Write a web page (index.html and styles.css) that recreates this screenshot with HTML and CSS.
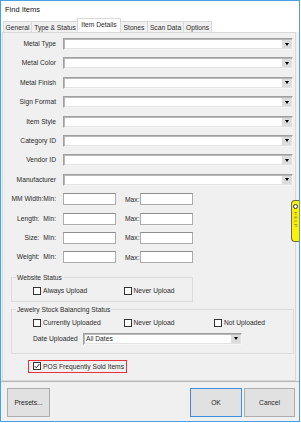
FILE: index.html
```html
<!DOCTYPE html>
<html lang="en">
<head>
    <meta charset="UTF-8">
    <title>Find Items</title>
    <link rel="stylesheet" href="styles.css">
</head>
<body>
    <div class="window">
        <div class="titlebar">Find Items</div>
        <div class="tabs">
            <div class="tab w-general">General</div>
            <div class="tab w-type">Type &amp; Status</div>
            <div class="tab w-item active">Item Details</div>
            <div class="tab w-stones">Stones</div>
            <div class="tab w-scan">Scan Data</div>
            <div class="tab w-options">Options</div>
        </div>
        <div class="panel">
            <div class="fields">
                <div class="lbl">Metal Type</div>
                <div class="combo"><span class="drop"></span></div>
                <div class="lbl">Metal Color</div>
                <div class="combo"><span class="drop"></span></div>
                <div class="lbl">Metal Finish</div>
                <div class="combo"><span class="drop"></span></div>
                <div class="lbl">Sign Format</div>
                <div class="combo"><span class="drop"></span></div>
                <div class="lbl">Item Style</div>
                <div class="combo"><span class="drop"></span></div>
                <div class="lbl">Category ID</div>
                <div class="combo"><span class="drop"></span></div>
                <div class="lbl">Vendor ID</div>
                <div class="combo"><span class="drop"></span></div>
                <div class="lbl">Manufacturer</div>
                <div class="combo"><span class="drop"></span></div>

                <div class="lbl range-lbl tight"><span>MM Width:</span><span>Min:</span></div>
                <div class="range"><div class="textbox"></div><span class="max">Max:</span><div class="textbox"></div></div>
                <div class="lbl range-lbl"><span>Length:</span><span>Min:</span></div>
                <div class="range"><div class="textbox"></div><span class="max">Max:</span><div class="textbox"></div></div>
                <div class="lbl range-lbl"><span>Size:</span><span>Min:</span></div>
                <div class="range"><div class="textbox"></div><span class="max">Max:</span><div class="textbox"></div></div>
                <div class="lbl range-lbl"><span>Weight:</span><span>Min:</span></div>
                <div class="range"><div class="textbox"></div><span class="max">Max:</span><div class="textbox"></div></div>
            </div>

            <fieldset class="group website">
                <legend>Website Status</legend>
                <div class="check-row">
                    <label class="check"><span class="cb"></span>Always Upload</label>
                    <label class="check"><span class="cb"></span>Never Upload</label>
                </div>
            </fieldset>

            <fieldset class="group stock">
                <legend>Jewelry Stock Balancing Status</legend>
                <div class="check-row">
                    <label class="check"><span class="cb"></span>Currently Uploaded</label>
                    <label class="check"><span class="cb"></span>Never Upload</label>
                    <label class="check"><span class="cb"></span>Not Uploaded</label>
                </div>
                <div class="date-row">
                    <span class="date-lbl">Date Uploaded</span>
                    <div class="combo date-combo"><span class="value">All Dates</span><span class="drop"></span></div>
                </div>
            </fieldset>

            <div class="pos">
                <label class="check">
                    <span class="cb checked">
                        <svg width="6" height="6" viewBox="0 0 6 6"><path d="M0.6 3.1 L2.3 4.8 L5.4 1.0" fill="none" stroke="#222" stroke-width="1"/></svg>
                    </span>POS Frequently Sold Items
                </label>
            </div>
        </div>
        <div class="footer">
            <button class="btn presets">Presets...</button>
            <button class="btn ok">OK</button>
            <button class="btn cancel">Cancel</button>
        </div>

        <!-- floating help tab on the right edge -->
        <div class="help-tab">
            <span class="help-dot"></span>
            <span class="help-text">HELP</span>
        </div>
    </div>
</body>
</html>
```

FILE: styles.css
```css
body {
    margin: 0;
    background: #ffffff;
    font-family: 'Liberation Sans', Arial, sans-serif;
    font-size: 6.7px;
    color: #2a2a2a;
}
.window {
    position: relative;
    width: 300px;
    height: 422px;
    box-sizing: border-box;
    border: 1px solid #4aa0e4;
    background: #f0f0f0;
    display: flex;
    flex-direction: column;
}
.titlebar {
    height: 17px;
    line-height: 17px;
    background: #ffffff;
    padding-left: 4px;
    font-size: 7.5px;
    color: #111;
}
.tabs {
    height: 14px;
    background: #ffffff;
    display: flex;
    align-items: flex-end;
    padding-left: 2px;
}
.tab {
    height: 11px;
    line-height: 11px;
    box-sizing: border-box;
    border: 1px solid #d9d9d9;
    border-bottom: none;
    margin-right: -1px;
    background: #f0f0f0;
    text-align: center;
    white-space: nowrap;
}
.tab.active {
    height: 14px;
    line-height: 12px;
    background: #ffffff;
    position: relative;
    z-index: 1;
    margin: 0 -1px 0 -1px;
}
.w-general { width: 29px; }
.w-type { width: 48px; }
.w-item { width: 44px; }
.w-stones { width: 28px; }
.w-scan { width: 37px; }
.w-options { width: 29px; }

.panel {
    height: 349px;
    box-sizing: border-box;
    margin: 0 3px 0 1px;
    border: 1px solid #d9d9d9;
    padding: 5px 2px 0 1px;
}
.fields {
    display: grid;
    grid-template-columns: 52px 1fr;
    grid-auto-rows: 12px;
    column-gap: 7px;
    row-gap: 7.4px;
}
.lbl {
    text-align: right;
    line-height: 12px;
    white-space: nowrap;
}
.range-lbl {
    display: flex;
    justify-content: flex-end;
    gap: 4px;
}
.range-lbl.tight {
    gap: 0;
}
.combo {
    box-sizing: border-box;
    background: #ffffff;
    border: 1px solid;
    border-color: #a0a0a0 #f4f4f4 #f4f4f4 #a0a0a0;
    box-shadow: inset 1px 1px 0 #b8b8b8, inset -1px -1px 0 #e3e3e3;
    display: flex;
    align-items: center;
    justify-content: flex-end;
    padding-right: 1px;
}
.drop {
    width: 9px;
    height: 8px;
    background: #dcdcdc;
    display: flex;
    align-items: center;
    justify-content: center;
}
.drop::after {
    content: "";
    border-left: 2.5px solid transparent;
    border-right: 2.5px solid transparent;
    border-top: 3px solid #000;
}
.range {
    display: flex;
    align-items: center;
}
.textbox {
    width: 53px;
    height: 12px;
    box-sizing: border-box;
    background: #ffffff;
    border: 1px solid #acacac;
    border-top-color: #8f8f8f;
}
.max {
    margin: 0 2px 0 9px;
    width: 13px;
}

.group {
    margin: 0;
    border: 1px solid #dcdcdc;
    padding: 0;
    min-width: 0;
}
.group legend {
    padding: 0 1px;
    margin-left: -17px;
    line-height: 9px;
}
.website {
    width: 182px;
    box-sizing: border-box;
    margin: 10px 0 0 7px;
    padding: 4px 0 6px 21px;
}
.stock {
    width: 283px;
    box-sizing: border-box;
    margin: 3px 0 0 7px;
    padding: 4px 0 8px 21px;
}
.check-row {
    display: grid;
    grid-template-columns: repeat(3, 90.5px);
    height: 9px;
    align-items: center;
}
.check {
    display: flex;
    align-items: center;
    white-space: nowrap;
}
.cb {
    width: 8px;
    height: 8px;
    box-sizing: border-box;
    border: 1px solid #333;
    background: #ffffff;
    margin-right: 2px;
    display: flex;
    align-items: center;
    justify-content: center;
}
.date-row {
    display: flex;
    align-items: center;
    margin-top: 5.5px;
    height: 12px;
}
.date-lbl {
    width: 50px;
}
.date-combo {
    width: 159px;
    height: 12px;
    justify-content: space-between;
}
.date-combo .value {
    padding-left: 2px;
}

.pos {
    width: 99px;
    height: 13px;
    box-sizing: border-box;
    margin: 6px 0 0 24px;
    border: 1.5px solid #e5323c;
    padding-left: 4px;
    display: flex;
    align-items: center;
}

.footer {
    flex: 1;
    border-top: 1px solid #b4b4b4;
    display: flex;
    align-items: flex-start;
    padding: 6px 4px 0 6px;
}
.btn {
    font-family: inherit;
    font-size: 6.7px;
    color: #1e1e1e;
    height: 29px;
    background: #e1e1e1;
    border: 1px solid #adadad;
    padding: 0;
}
.presets {
    width: 43px;
    margin-right: auto;
}
.ok {
    width: 52px;
    border: 1.5px solid #3c8fdc;
    margin-right: 2px;
}
.cancel {
    width: 51px;
}

.help-tab {
    position: absolute;
    left: 290px;
    top: 199px;
    width: 8px;
    height: 42px;
    box-sizing: border-box;
    background: #fff200;
    border: 1px solid #6b6b40;
    border-right: none;
    border-radius: 4px 0 0 4px;
    display: flex;
    flex-direction: column;
    align-items: center;
    padding-top: 3px;
}
.help-dot {
    width: 3px;
    height: 3px;
    border: 1px solid #333;
    border-radius: 50%;
    background: #fff;
}
.help-text {
    margin-top: 3px;
    writing-mode: vertical-rl;
    font-size: 4px;
    letter-spacing: 1.5px;
    color: #5a5a20;
}
```
